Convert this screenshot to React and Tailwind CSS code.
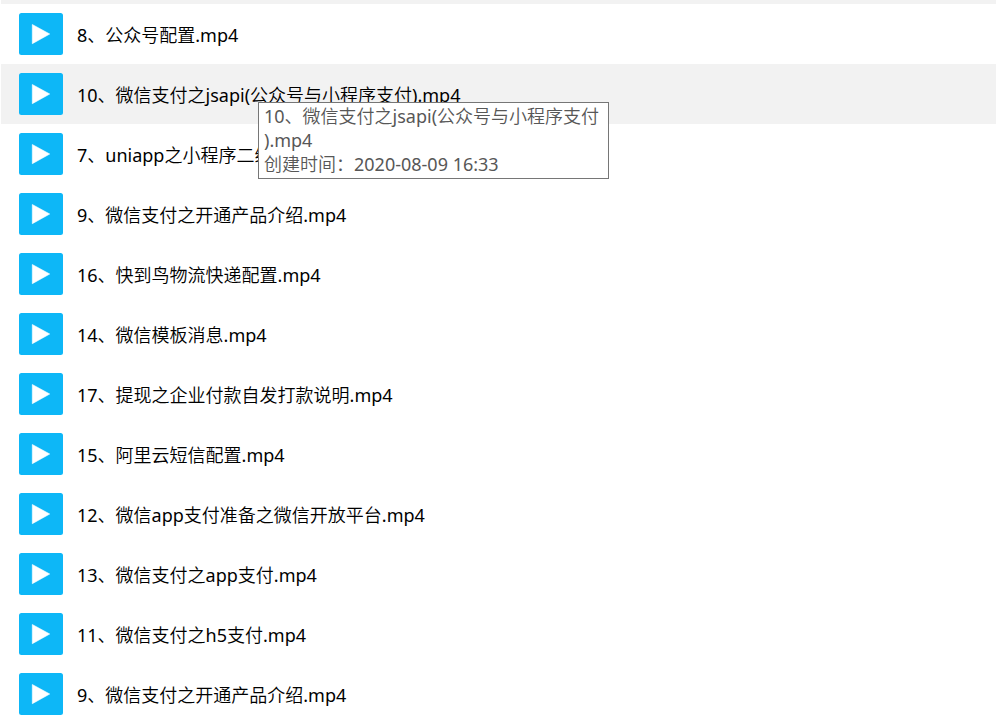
const files = [
    { id: 1, name: "8、公众号配置.mp4" },
    { id: 2, name: "10、微信支付之jsapi(公众号与小程序支付).mp4", created: "2020-08-09 16:33" },
    { id: 3, name: "7、uniapp之小程序二维码.mp4" },
    { id: 4, name: "9、微信支付之开通产品介绍.mp4" },
    { id: 5, name: "16、快到鸟物流快递配置.mp4" },
    { id: 6, name: "14、微信模板消息.mp4" },
    { id: 7, name: "17、提现之企业付款自发打款说明.mp4" },
    { id: 8, name: "15、阿里云短信配置.mp4" },
    { id: 9, name: "12、微信app支付准备之微信开放平台.mp4" },
    { id: 10, name: "13、微信支付之app支付.mp4" },
    { id: 11, name: "11、微信支付之h5支付.mp4" },
    { id: 12, name: "9、微信支付之开通产品介绍.mp4" },
];

const activeId = 2;

function VideoIcon() {
    return (
        <svg width="44" height="42" viewBox="0 0 44 42" className="shrink-0" aria-hidden="true">
            <rect width="44" height="42" rx="2.5" fill="#0db7f7" />
            <path d="M13.3 11.5 L30.7 21 L13.3 30.7 Z" fill="#fff" stroke="#fff" strokeWidth="0.6" strokeLinejoin="round" />
        </svg>
    );
}

function Tooltip({ file }) {
    return (
        <div
            role="tooltip"
            className="absolute left-[257px] top-[38px] z-10 w-[351px] border border-[#767676] bg-white px-[5px] pt-px pb-0.5 leading-6 text-[#575757] [line-break:anywhere]"
        >
            <p>{file.name}</p>
            <p>创建时间：{file.created}</p>
        </div>
    );
}

function FileRow({ file, active }) {
    return (
        <li className={`relative flex h-[60px] items-center gap-3.5 pl-[18px] ${active ? "bg-[#f2f2f2]" : "bg-white"}`}>
            <VideoIcon />
            <a href="#" className="pt-0.5 text-black whitespace-nowrap">{file.name}</a>
            {active && <Tooltip file={file} />}
        </li>
    );
}

export default function App() {
    return (
        <main className="min-h-screen bg-white pl-px text-lg font-normal font-['Noto_Sans','Noto_Sans_CJK_SC_DemiLight','Noto_Sans_CJK_SC',sans-serif]">
            <ul className="border-t-4 border-[#f2f2f2]">
                {files.map((file) => (
                    <FileRow key={file.id} file={file} active={file.id === activeId} />
                ))}
            </ul>
        </main>
    );
}
